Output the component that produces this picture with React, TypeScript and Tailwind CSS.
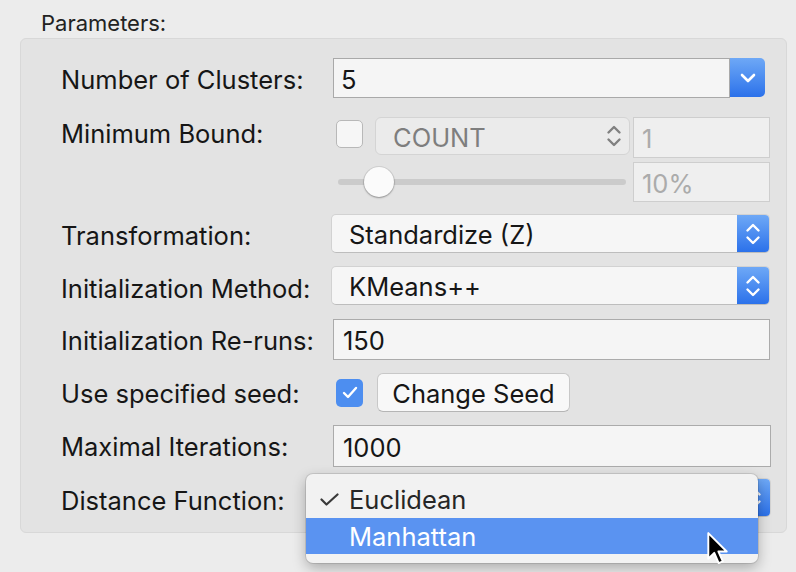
import React from "react";

const ChevDown = () => (
  <svg width="16" height="10" viewBox="0 0 16 10" fill="none">
    <path d="M2 2 L8 8 L14 2" stroke="white" strokeWidth="2.6" strokeLinecap="round" strokeLinejoin="round" />
  </svg>
);

const UpDown = ({ color = "white", w = 16 }: { color?: string; w?: number }) => (
  <svg width={w} height="24" viewBox="0 0 16 24" fill="none">
    <path d="M2.5 8.5 L8 3 L13.5 8.5" stroke={color} strokeWidth="2.4" strokeLinecap="round" strokeLinejoin="round" />
    <path d="M2.5 15.5 L8 21 L13.5 15.5" stroke={color} strokeWidth="2.4" strokeLinecap="round" strokeLinejoin="round" />
  </svg>
);

const Label = ({ children, h, shift = "pt-[4px]" }: { children: React.ReactNode; h: string; shift?: string }) => (
  <div className={`w-[270px] shrink-0 flex items-center ${h} ${shift} whitespace-nowrap`}>{children}</div>
);

const Select = ({ text, w }: { text: string; w: string }) => (
  <div className={`${w} h-[39px] flex rounded-[5px] bg-[#f6f6f6] border border-[#d2d2d2] border-b-[#bdbdbd] overflow-hidden`}>
    <div className="flex-1 flex items-center pl-[17px] pt-[4px] whitespace-nowrap">{text}</div>
    <div className="w-[32px] h-full bg-linear-to-b from-[#6ea8f6] to-[#2b71ea] flex items-center justify-center">
      <UpDown />
    </div>
  </div>
);

const Field = ({ text, w, h }: { text: string; w: string; h: string }) => (
  <div className={`${w} ${h} flex items-center pl-[9px] pt-[4px] bg-[#f5f5f5] border border-[#ababab]`}>{text}</div>
);

export default function App() {
  return (
    <div className="relative w-[796px] h-[572px] overflow-hidden bg-[#ececec] font-['Inter',sans-serif] text-[25.5px] text-[#161616]">
      <div className="h-[38px] pl-[41px] pt-[12px] text-[22px] leading-[22px] text-[#222]">Parameters:</div>
      <div className="ml-[20px] w-[767px] h-[495px] rounded-[6px] bg-[#e3e3e3] border border-[#d8d8d8] pl-[40px] pt-[19px] flex flex-col">
        {/* Row 1 */}
        <div className="flex h-[40px]">
          <Label h="h-[40px]">Number of Clusters:</Label>
          <div className="ml-[2px] flex">
            <div className="w-[397px] h-[40px] flex items-center pl-[7px] pt-[4px] bg-[#f5f5f5] border border-[#a9a9a9]">5</div>
            <div className="w-[35px] h-[39px] rounded-r-[5px] bg-linear-to-b from-[#6ea8f6] to-[#2b71ea] flex items-center justify-center">
              <ChevDown />
            </div>
          </div>
        </div>
        {/* Row 2 */}
        <div className="flex mt-[19px]">
          <Label h="h-[41px]" shift="pb-[6px]">Minimum Bound:</Label>
          <div className="flex flex-col gap-[4px]">
            <div className="flex items-start h-[41px]">
              <div className="ml-[5px] mt-[3px] w-[27px] h-[28px] rounded-[5px] bg-[#f6f6f6] border border-[#b8b8b8]" />
              <div className="ml-[12px] w-[255px] h-[38px] rounded-[6px] bg-[#ebebeb] border border-[#d4d4d4] flex items-center justify-between pl-[17px] pr-[7px] text-[#7e7e7e]">
                <span className="pt-[4px]">COUNT</span>
                <UpDown color="#808080" />
              </div>
              <div className="ml-[3px] w-[137px] h-[41px] flex items-center pl-[8px] pt-[4px] bg-[#efefef] border border-[#cecece] text-[#ababab]">1</div>
            </div>
            <div className="flex items-center h-[40px]">
              <div className="relative ml-[7px] w-[288px] h-[40px] flex items-center">
                <div className="w-full h-[6px] rounded-full bg-[#cbcbcb]" />
                <div className="absolute left-[26px] top-[5px] w-[30px] h-[30px] rounded-full bg-[#fbfbfb] shadow-[0_1px_2px_rgba(0,0,0,0.3),0_0_0_1px_rgba(0,0,0,0.08)]" />
              </div>
              <div className="ml-[7px] w-[137px] h-[40px] flex items-center pl-[8px] pt-[4px] bg-[#efefef] border border-[#cecece] text-[#ababab]">10%</div>
            </div>
          </div>
        </div>
        {/* Row 3 */}
        <div className="flex mt-[12px]">
          <Label h="h-[39px]" shift="pt-[5px]">Transformation:</Label>
          <Select text="Standardize (Z)" w="w-[439px]" />
        </div>
        {/* Row 4 */}
        <div className="flex mt-[13px]">
          <Label h="h-[39px]" shift="pt-[7px]">Initialization Method:</Label>
          <Select text="KMeans++" w="w-[439px]" />
        </div>
        {/* Row 5 */}
        <div className="flex mt-[14px]">
          <Label h="h-[41px]" shift="pt-[3px]">Initialization Re-runs:</Label>
          <div className="ml-[2px]">
            <Field text="150" w="w-[437px]" h="h-[41px]" />
          </div>
        </div>
        {/* Row 6 */}
        <div className="flex mt-[13px] items-center">
          <Label h="h-[39px]" shift="pt-[4px]">Use specified seed:</Label>
          <div className="ml-[5px] w-[27px] h-[28px] rounded-[5px] bg-[#4d8ef0] flex items-center justify-center">
            <svg width="16" height="13" viewBox="0 0 16 13" fill="none">
              <path d="M2 7 L6 11 L14 2" stroke="white" strokeWidth="2.4" strokeLinecap="round" strokeLinejoin="round" />
            </svg>
          </div>
          <div className="ml-[14px] w-[193px] h-[39px] rounded-[6px] bg-[#f8f8f8] border border-[#c8c8c8] border-b-[#b5b5b5] flex items-center justify-center pt-[4px]">
            Change Seed
          </div>
        </div>
        {/* Row 7 */}
        <div className="flex mt-[13px]">
          <Label h="h-[42px]" shift="pt-[2px]">Maximal Iterations:</Label>
          <div className="ml-[2px]">
            <Field text="1000" w="w-[438px]" h="h-[42px]" />
          </div>
        </div>
        {/* Row 8 */}
        <div className="flex mt-[11px]">
          <Label h="h-[39px]" shift="pt-[7px]">Distance Function:</Label>
          <Select text="Euclidean" w="w-[440px]" />
        </div>
      </div>

      {/* Popup menu */}
      <div className="absolute left-[306px] top-[474px] w-[452px] h-[89px] rounded-[7px] bg-[#f2f2f2] shadow-[0_5px_14px_rgba(0,0,0,0.28),0_0_0_1px_rgba(0,0,0,0.1)] pt-[5px] overflow-hidden">
        <div className="h-[39px] flex items-center">
          <div className="w-[43px] flex justify-center pl-[3px] pt-[1px]">
            <svg width="19" height="13" viewBox="0 0 19 13" fill="none">
              <path d="M1.5 6.5 L6.5 11.5 L17.5 1.5" stroke="#3a3a3a" strokeWidth="2.2" strokeLinecap="round" strokeLinejoin="round" />
            </svg>
          </div>
          <span className="pt-[4px] text-[#262626]">Euclidean</span>
        </div>
        <div className="h-[36px] flex items-center bg-[#5a93f1] text-white pl-[43px]">
          <span className="pt-[3px]">Manhattan</span>
        </div>
      </div>

      {/* Cursor */}
      <svg className="absolute left-[706px] top-[531px]" width="24" height="36" viewBox="0 0 17 26" fill="none">
        <path d="M1.5 1.5 L1.5 20 L5.8 15.8 L9 23.2 L12 22 L8.8 14.8 L14.8 14.8 Z" fill="black" stroke="white" strokeWidth="1.4" strokeLinejoin="round" />
      </svg>
    </div>
  );
}
